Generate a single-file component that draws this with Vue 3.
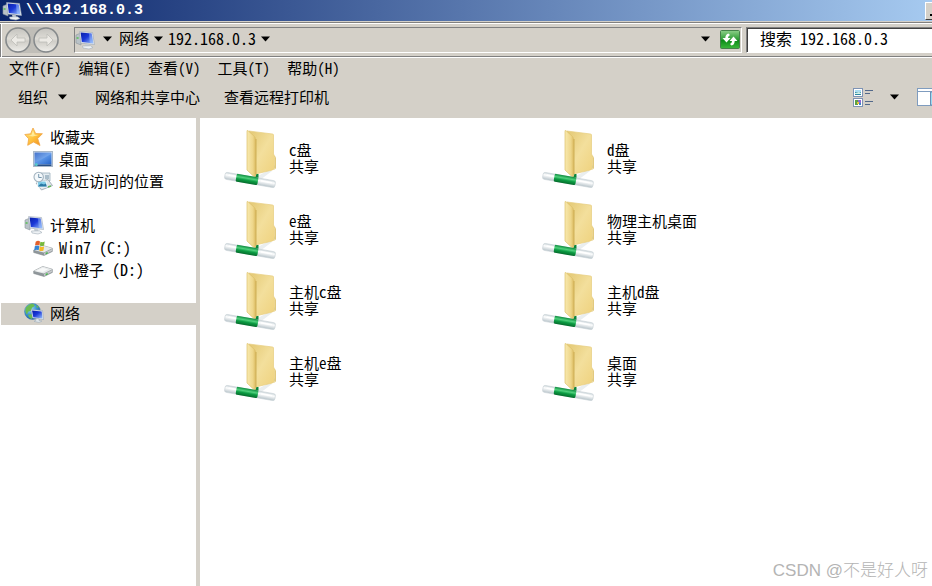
<script setup>
import { ref } from 'vue'

const search = ref('')

const menus = [
  { label: '文件', key: '(F)' },
  { label: '编辑', key: '(E)' },
  { label: '查看', key: '(V)' },
  { label: '工具', key: '(T)' },
  { label: '帮助', key: '(H)' }
]

const groups = [
  {
    name: '收藏夹',
    icon: 'star',
    items: [
      { label: '桌面', latin: '', icon: 'desktop' },
      { label: '最近访问的位置', latin: '', icon: 'recent' }
    ]
  },
  {
    name: '计算机',
    icon: 'computer',
    items: [
      { label: '', latin: 'Win7 (C:)', icon: 'windrive' },
      { label: '小橙子', latin: ' (D:)', icon: 'drive' }
    ]
  },
  { name: '网络', icon: 'network', active: true, items: [] }
]

const shares = [
  ['', 'c', '盘'],
  ['', 'd', '盘'],
  ['', 'e', '盘'],
  ['物理主机桌面', '', ''],
  ['主机', 'c', '盘'],
  ['主机', 'd', '盘'],
  ['主机', 'e', '盘'],
  ['桌面', '', '']
]
</script>

<template>
  <div class="window">
    <svg class="sprite" aria-hidden="true">
      <defs>
        <linearGradient id="gScreen" x1="0" y1="0" x2="1" y2="1">
          <stop offset="0" stop-color="#0a1fa8" /><stop offset=".45" stop-color="#1a38d8" /><stop offset="1" stop-color="#9cc4fa" />
        </linearGradient>
        <linearGradient id="gDesk" x1="0" y1="0" x2="1" y2="1">
          <stop offset="0" stop-color="#2a5fc4" /><stop offset=".5" stop-color="#5c96e8" /><stop offset="1" stop-color="#2463c8" />
        </linearGradient>
        <linearGradient id="gStar" x1="0" y1="0" x2="1" y2="1">
          <stop offset="0" stop-color="#ffe684" /><stop offset=".5" stop-color="#ffc440" /><stop offset="1" stop-color="#f08a1c" />
        </linearGradient>
        <linearGradient id="gFront" x1="0" y1="0" x2="1" y2="0">
          <stop offset="0" stop-color="#f8e9ae" /><stop offset=".7" stop-color="#eed68a" /><stop offset="1" stop-color="#dcbc62" />
        </linearGradient>
        <linearGradient id="gBack" x1="0" y1="0" x2="1" y2="1">
          <stop offset="0" stop-color="#e3c873" /><stop offset=".5" stop-color="#f3df9c" /><stop offset="1" stop-color="#efd27e" />
        </linearGradient>
        <linearGradient id="gPipe" x1="0" y1="0" x2="0" y2="1">
          <stop offset="0" stop-color="#ccd6da" /><stop offset=".35" stop-color="#ffffff" /><stop offset="1" stop-color="#b8c4ca" />
        </linearGradient>
        <linearGradient id="gGreen" x1="0" y1="0" x2="0" y2="1">
          <stop offset="0" stop-color="#0b8a3c" /><stop offset=".35" stop-color="#4fd07c" /><stop offset=".6" stop-color="#0c9c43" /><stop offset="1" stop-color="#056b2b" />
        </linearGradient>
        <linearGradient id="gRefresh" x1="0" y1="0" x2="0" y2="1">
          <stop offset="0" stop-color="#8ed08a" /><stop offset=".5" stop-color="#2c9c34" /><stop offset=".55" stop-color="#0c8c18" /><stop offset="1" stop-color="#3cb83c" />
        </linearGradient>
        <radialGradient id="gGlobe" cx=".35" cy=".3" r=".8">
          <stop offset="0" stop-color="#a8e0f8" /><stop offset=".5" stop-color="#3c94d4" /><stop offset="1" stop-color="#124c98" />
        </radialGradient>
        <linearGradient id="gRound" x1="0" y1="0" x2="0" y2="1">
          <stop offset="0" stop-color="#c4c3be" /><stop offset=".45" stop-color="#dedcd6" /><stop offset=".55" stop-color="#cfcdc7" /><stop offset="1" stop-color="#efeeea" />
        </linearGradient>
      </defs>
      <symbol id="computer" viewBox="0 0 20 20">
        <path d="M1 5l5-2v12l-5-2z" fill="#b9c2c8" stroke="#8b959c" stroke-width=".6" />
        <path d="M1.600 8h2" stroke="#4fc04a" stroke-width="1.400" />
        <path d="M4.500 1.600l13 .9 2 12-13.600-1.400z" fill="#e8edf2" stroke="#98a5b2" stroke-width=".6" />
        <path d="M5.600 2.600l11 .8 1.800 10-11.600-1.300z" fill="url(#gScreen)" />
        <path d="M14 3.300l2.600.2 1.700 9.700-3.500-.4z" fill="#a4caff" opacity=".45" />
        <path d="M10 13.700l4 .5.5 2.300-4-.4z" fill="#c3cbd2" />
        <path d="M7.500 16l8-.2 2.500 1.700-4 1.500-6-1z" fill="#eef2f5" stroke="#a1adb7" stroke-width=".6" />
      </symbol>
      <symbol id="star" viewBox="0 0 20 20">
        <path d="M9 1l2.700 5.600 6.700.1-4.700 4.800 2.300 7-6.500-3.500-5.800 3.300 1-6.500L.8 7.500l5.800-.7z" fill="url(#gStar)" stroke="#f0a544" stroke-width=".8" stroke-linejoin="round" />
        <path d="M9 3.500l1.700 4.200 4 .2-6 1.600-4.500-.7 3.200-.8z" fill="#fff2ae" opacity=".8" />
      </symbol>
      <symbol id="desktop" viewBox="0 0 20 20">
        <rect x=".5" y="2.500" width="19" height="15" fill="#dce5ef" stroke="#a9b8c8" />
        <rect x="1.500" y="3.500" width="17" height="12" fill="url(#gDesk)" />
        <path d="M1.500 14L18.500 5v-1.500h-17z" fill="#fff" opacity=".13" />
        <path d="M1.500 15.500h17v1.500h-17z" fill="#284f86" />
        <circle cx="3.300" cy="15.600" r="1.500" fill="#58c5c9" />
      </symbol>
      <symbol id="recent" viewBox="0 0 20 20">
        <path d="M8 2h9v8H8z" fill="#e5edf2" stroke="#91a6b4" stroke-width=".7" />
        <path d="M12 5h4M12 7h4" stroke="#6f8da2" />
        <path d="M3 12l12-3.500 4.500 6-11 4.500z" fill="#dfe5e9" stroke="#8a98a4" stroke-width=".7" />
        <path d="M4 10h9l1 6H5z" fill="#7fcbe8" stroke="#f7fafa" />
        <path d="M5 15l3-2.500 3 1 2-1 .8 3H5z" fill="#2c79a4" />
        <circle cx="5.700" cy="6" r="4.700" fill="#f3f8fb" stroke="#a3b3bf" stroke-width="1.100" />
        <path d="M5.700 3v3.500h3" stroke="#557c98" stroke-width=".8" fill="none" />
        <path d="M15 16l3-1" stroke="#65b75d" stroke-width="1.500" />
      </symbol>
      <symbol id="drive" viewBox="0 0 20 20">
        <path d="M.7 12l9-4.500 9.600 2.700v3.300l-8.300 4-10.300-3z" fill="#90979b" stroke="#777e83" stroke-width=".5" />
        <path d="M.7 12l9-4.500 9.600 2.700-8.500 4.300z" fill="#e6e9ea" />
        <path d="M3 12l6.500-3.300 5.500 1.600-5 2.700z" fill="#f8f9f9" />
        <path d="M11 15l8-4v2l-8 4z" fill="#c6cacc" />
        <path d="M12.700 15.600l2-1" stroke="#42b647" stroke-width="1.500" />
      </symbol>
      <symbol id="windrive" viewBox="0 0 20 20">
        <path d="M.7 13l9-4.500 9.600 2.700v3.300l-8.300 4-10.300-3z" fill="#90979b" stroke="#777e83" stroke-width=".5" />
        <path d="M.7 13l9-4.500 9.600 2.700-8.500 4.300z" fill="#e6e9ea" />
        <path d="M11 16l8-4v2l-8 4z" fill="#c6cacc" />
        <path d="M12.700 16.600l2-1" stroke="#42b647" stroke-width="1.500" />
        <path d="M2.700 4.700q2.300-1.500 4.300-.3l-.5 4q-2-1-4.500.2z" fill="#e3602b" />
        <path d="M7.400 4.800q2 1 4.300-.2l-.6 4q-2.300 1-4.300 0z" fill="#77b83c" />
        <path d="M1.800 9.200q2.400-1.100 4.500-.1l-.6 4.100q-2-1-4.500.2z" fill="#3685d4" />
        <path d="M6.800 9.400q2 1 4.300.1l-.6 4.100q-2.300 1-4.400 0z" fill="#f5b826" />
      </symbol>
      <symbol id="network" viewBox="0 0 20 20">
        <circle cx="8.500" cy="8.500" r="8" fill="url(#gGlobe)" stroke="#3f7ea8" stroke-width=".5" />
        <path d="M2 4.500q3-4 7-3.800l2 2-3 2-1 3-3 1-1 3q-2.500-3-1-7.200zM4 12l3-1 2 2-1 3q-3-.5-4-4zM12 2l3 2-2 1z" fill="#6abb50" />
        <path d="M7 6.500l11.500 1 1 9-11-1.500z" fill="#e5ecf3" stroke="#8498af" stroke-width=".5" />
        <path d="M8 7.500l9.700.9.800 7-9.200-1.200z" fill="url(#gScreen)" />
        <path d="M12 15.500l3 .3v1.700l3 .5-3 1.500-5-1.200 2-1z" fill="#dfe6eb" stroke="#97a5b3" stroke-width=".5" />
      </symbol>
      <symbol id="share" viewBox="0 0 52 60">
        <path d="M30 49l14-7.500 4 .5-12 9z" fill="#eaeeef" />
        <path d="M47 27.500h3.500q1 0 1 1V39q0 1-1 1H46z" fill="#fffdf4" stroke="#e2c97e" />
        <path d="M48 36.500h2.500v2.500H48z" fill="#5aa1ee" />
        <path d="M25 2L48.500 5q1 .1 1 1V25l1 2v12l-2 2-17 4z" fill="url(#gBack)" stroke="#e6cd7e" stroke-width=".7" />
        <path d="M23 2.500q-.3-1.500 1-.8l6.500 5.800q1 1 1 2.500V49L23 41z" fill="url(#gFront)" stroke="#dcc06a" stroke-width=".7" />
        <path d="M32 10v36" stroke="#c7a448" stroke-width=".8" />
        <path d="M27 48l4 1.200 1.500-4.200h2v4l-1 4h-7z" fill="#0a853a" />
        <g transform="rotate(10 26 51)">
          <rect x=".5" y="47.500" width="51" height="7" rx="2" fill="url(#gPipe)" stroke="#c6d0d4" stroke-width=".6" />
          <path d="M4 49.800h8M37 49.800h11" stroke="#fff" stroke-width="1.500" />
          <rect x="12" y="47" width="22" height="8" rx="1.500" fill="url(#gGreen)" />
        </g>
      </symbol>
      <symbol id="caret" viewBox="0 0 9 6">
        <path d="M0 .5h9L4.500 5.500z" fill="#000" />
      </symbol>
    </svg>

    <header class="titlebar">
      <svg class="icon"><use href="#computer" /></svg>
      <h1>\\192.168.0.3</h1>
      <button class="minimize" aria-label="最小化"><i></i></button>
    </header>

    <div class="navbar">
      <div class="history">
        <button aria-label="后退">
          <svg viewBox="0 0 26 26"><circle cx="13" cy="13" r="12" fill="url(#gRound)" stroke="#85898b" stroke-width="1.500" /><path d="M6 13l6-6v4h8v4h-8v4z" fill="#eceae5" stroke="#bdbcb7" stroke-width=".8" /></svg>
        </button>
        <button aria-label="前进">
          <svg viewBox="0 0 26 26"><circle cx="13" cy="13" r="12" fill="url(#gRound)" stroke="#85898b" stroke-width="1.500" /><path d="M20 13l-6-6v4H6v4h8v4z" fill="#eceae5" stroke="#bdbcb7" stroke-width=".8" /></svg>
        </button>
      </div>
      <nav class="address" aria-label="地址">
        <svg class="icon"><use href="#computer" /></svg>
        <button class="drop first" aria-label="位置"><svg class="caret"><use href="#caret" /></svg></button>
        <button class="crumb">网络</button>
        <button class="drop" aria-label="网络列表"><svg class="caret"><use href="#caret" /></svg></button>
        <button class="crumb latin wide">192.168.0.3</button>
        <button class="drop" aria-label="共享列表"><svg class="caret"><use href="#caret" /></svg></button>
        <button class="drop recent" aria-label="以前的位置"><svg class="caret"><use href="#caret" /></svg></button>
        <button class="refresh" aria-label="刷新">
          <svg viewBox="0 0 20 19">
            <rect x=".5" y=".5" width="19" height="18" rx="1" fill="url(#gRefresh)" stroke="#45824a" />
            <path d="M8.500 3.500Q5.500 4 5.300 8H2.500l4 4.500L10.500 8H8q0-2 2-3z" fill="#fff" />
            <path d="M11.500 15.500q3-.5 3.200-4.500h2.800l-4-4.500L9.500 11H12q0 2-2 3z" fill="#fff" />
          </svg>
        </button>
      </nav>
      <input v-model="search" class="search" type="search" aria-label="搜索" placeholder="搜索 192.168.0.3" />
    </div>

    <nav class="menubar" aria-label="菜单">
      <button v-for="m in menus" :key="m.key">{{ m.label }}<span class="latin">{{ m.key }}</span></button>
    </nav>

    <div class="toolbar">
      <button class="organize">组织<svg class="caret"><use href="#caret" /></svg></button>
      <button>网络和共享中心</button>
      <button>查看远程打印机</button>
      <div class="views">
        <button aria-label="更改视图">
          <svg class="viewicon" viewBox="0 0 21 19">
            <rect x=".5" y=".5" width="9" height="8" fill="#fff" stroke="#7d93b5" />
            <path d="M2 2h6v2H2z" fill="#a9dcf2" /><path d="M2 4h6v3H2z" fill="#2b86a0" /><path d="M2 5l4-1 2 1v1H2z" fill="#d4f2e8" />
            <rect x=".5" y="10.500" width="9" height="8" fill="#fff" stroke="#7d93b5" />
            <path d="M2 12h3v5H2z" fill="#5ca045" /><path d="M5 12h3v3H5z" fill="#8b68d2" /><path d="M4 14h2v2H4z" fill="#e8c13a" /><path d="M6 15h2v2H6z" fill="#3b83c8" />
            <path d="M12 2.500h8M12 5.500h5M12 13.500h8M12 16.500h5" stroke="#53698a" />
          </svg>
        </button>
        <button aria-label="更多选项"><svg class="caret"><use href="#caret" /></svg></button>
        <button class="pane" aria-label="预览窗格">
          <svg class="paneicon" viewBox="0 0 20 18">
            <rect x=".5" y=".5" width="19" height="17" fill="#fff" stroke="#7f9cbf" />
            <path d="M1 3.500h18" stroke="#7f9cbf" />
            <path d="M13.500 4h5.500v13h-5.500z" fill="#9bdcf2" stroke="#6b91b4" />
          </svg>
        </button>
      </div>
    </div>

    <div class="body">
      <aside class="sidebar">
        <section v-for="g in groups" :key="g.name">
          <a href="#" class="node" :class="{ active: g.active }"><svg class="icon"><use :href="'#' + g.icon" /></svg>{{ g.name }}</a>
          <a v-for="i in g.items" :key="i.icon" href="#" class="node child"><svg class="icon"><use :href="'#' + i.icon" /></svg><span>{{ i.label }}<span v-if="i.latin" class="latin wide">{{ i.latin }}</span></span></a>
        </section>
      </aside>
      <main class="files">
        <a v-for="(s, n) in shares" :key="n" href="#" class="file">
          <svg class="folder"><use href="#share" /></svg>
          <span class="caption">
            <span>{{ s[0] }}<span v-if="s[1]" class="latin">{{ s[1] }}</span>{{ s[2] }}</span>
            <span>共享</span>
          </span>
        </a>
      </main>
    </div>
    <div class="watermark">CSDN @不是好人呀</div>
  </div>
</template>

<style>
body {
  margin: 0;
  background: #fff;
}
</style>

<style scoped>
.window {
  position: relative;
  display: flex;
  flex-direction: column;
  min-height: 100vh;
  overflow: hidden;
  color: #000;
  font: 15px/16px "Noto Sans CJK SC", sans-serif;
}
.window * {
  box-sizing: border-box;
}
.sprite {
  position: absolute;
  width: 0;
  height: 0;
}
button {
  display: flex;
  align-items: center;
  padding: 0;
  border: 0;
  background: none;
  color: inherit;
  font: inherit;
  white-space: nowrap;
}
a {
  color: inherit;
  text-decoration: none;
}
svg {
  display: block;
  flex: none;
}
.icon {
  width: 20px;
  height: 20px;
}
.caret {
  width: 9px;
  height: 6px;
}
.latin {
  font-feature-settings: "hwid";
  white-space: pre;
}
.wide {
  font-size: 16px;
  line-height: 16px;
}
.titlebar {
  display: flex;
  align-items: center;
  gap: 4px;
  height: 21px;
  padding-left: 2px;
  overflow: hidden;
  background: linear-gradient(90deg, #0a246a, #a6caf0);
  color: #fff;
}
.titlebar h1 {
  flex: 1;
  margin: 0;
  font: bold 15px/20px "Liberation Mono", monospace;
}
.minimize {
  align-items: flex-end;
  width: 16px;
  height: 18px;
  margin-right: -9px;
  padding: 0 0 3px 4px;
  border: 1px solid #fff;
  border-bottom-color: #404040;
  background: #d4d0c8;
}
.minimize i {
  width: 7px;
  height: 2px;
  background: #000;
}
.navbar {
  display: flex;
  align-items: center;
  height: 37px;
  padding: 0 0 0 5px;
  border-top: 1px solid #d4d0c8;
  border-bottom: 1px solid #fff;
  background: #d4d0c8;
  box-shadow: inset 0 1px #808080, inset 0 2px #fff, inset 1px 0 #808080, inset 2px 0 #fff, inset 0 -1px #808080;
}
.history {
  display: flex;
  gap: 2px;
  margin-right: 15px;
  border-radius: 13px;
  background: #c0beb8;
}
.history svg {
  width: 26px;
  height: 26px;
}
.address {
  display: flex;
  flex: 1;
  align-items: center;
  height: 26px;
  border: 1px solid #808080;
  border-right-color: #fff;
  border-bottom-color: #fff;
  background: #d4d0c8;
}
.address .icon {
  margin-right: 3px;
}
.drop {
  padding: 0 5px 2px;
}
.first {
  padding-right: 7px;
}
.crumb {
  padding-bottom: 4px;
}
.recent {
  margin-left: auto;
}
.refresh {
  margin: 0 1px 0 5px;
}
.refresh svg {
  width: 20px;
  height: 19px;
}
.search {
  width: 192px;
  height: 26px;
  margin: 0 -6px 0 4px;
  padding: 0 13px 3px;
  border: 1px solid #808080;
  border-bottom-color: #fff;
  border-radius: 0;
  background: #fff;
  box-shadow: inset 1px 1px #404040;
  color: #000;
  font: 16px/18px "Noto Sans CJK SC", sans-serif;
  font-feature-settings: "hwid";
  outline: 0;
}
.search::placeholder {
  color: #000;
  opacity: 1;
}
.menubar {
  display: flex;
  gap: 17px;
  height: 20px;
  padding: 0 9px;
  background: #d4d0c8;
}
.toolbar {
  display: flex;
  align-items: center;
  gap: 24px;
  height: 40px;
  padding: 0 0 2px 18px;
  overflow: hidden;
  background: #d4d0c8;
}
.organize {
  gap: 10px;
  margin-right: 4px;
}
.views {
  display: flex;
  align-items: center;
  gap: 16px;
  margin-left: auto;
}
.viewicon {
  width: 21px;
  height: 19px;
}
.paneicon {
  width: 20px;
  height: 18px;
}
.pane {
  margin: 0 -5px 0 2px;
}
.body {
  display: flex;
  flex: 1;
}
.sidebar {
  display: flex;
  flex: none;
  flex-direction: column;
  gap: 22px;
  width: 200px;
  padding: 9px 0;
  border-right: 4px solid #d4d0c8;
}
.node {
  display: flex;
  align-items: center;
  gap: 6px;
  height: 22px;
  margin-left: 1px;
  padding: 0 0 2px 23px;
}
.child {
  padding-left: 32px;
}
.active {
  background: #d4d0c8;
}
.files {
  display: grid;
  flex: 1;
  grid-template-columns: repeat(auto-fill, 318px);
  align-content: start;
  padding: 11px 0 0 24px;
}
.file {
  display: flex;
  gap: 13px;
  height: 71px;
}
.folder {
  width: 52px;
  height: 60px;
}
.caption {
  display: flex;
  flex-direction: column;
  padding-top: 13px;
}
.watermark {
  position: absolute;
  right: 4px;
  bottom: 5px;
  color: #b4b4b4;
  font: 300 17px/20px "Liberation Sans", "Noto Sans CJK SC", sans-serif;
}
</style>
